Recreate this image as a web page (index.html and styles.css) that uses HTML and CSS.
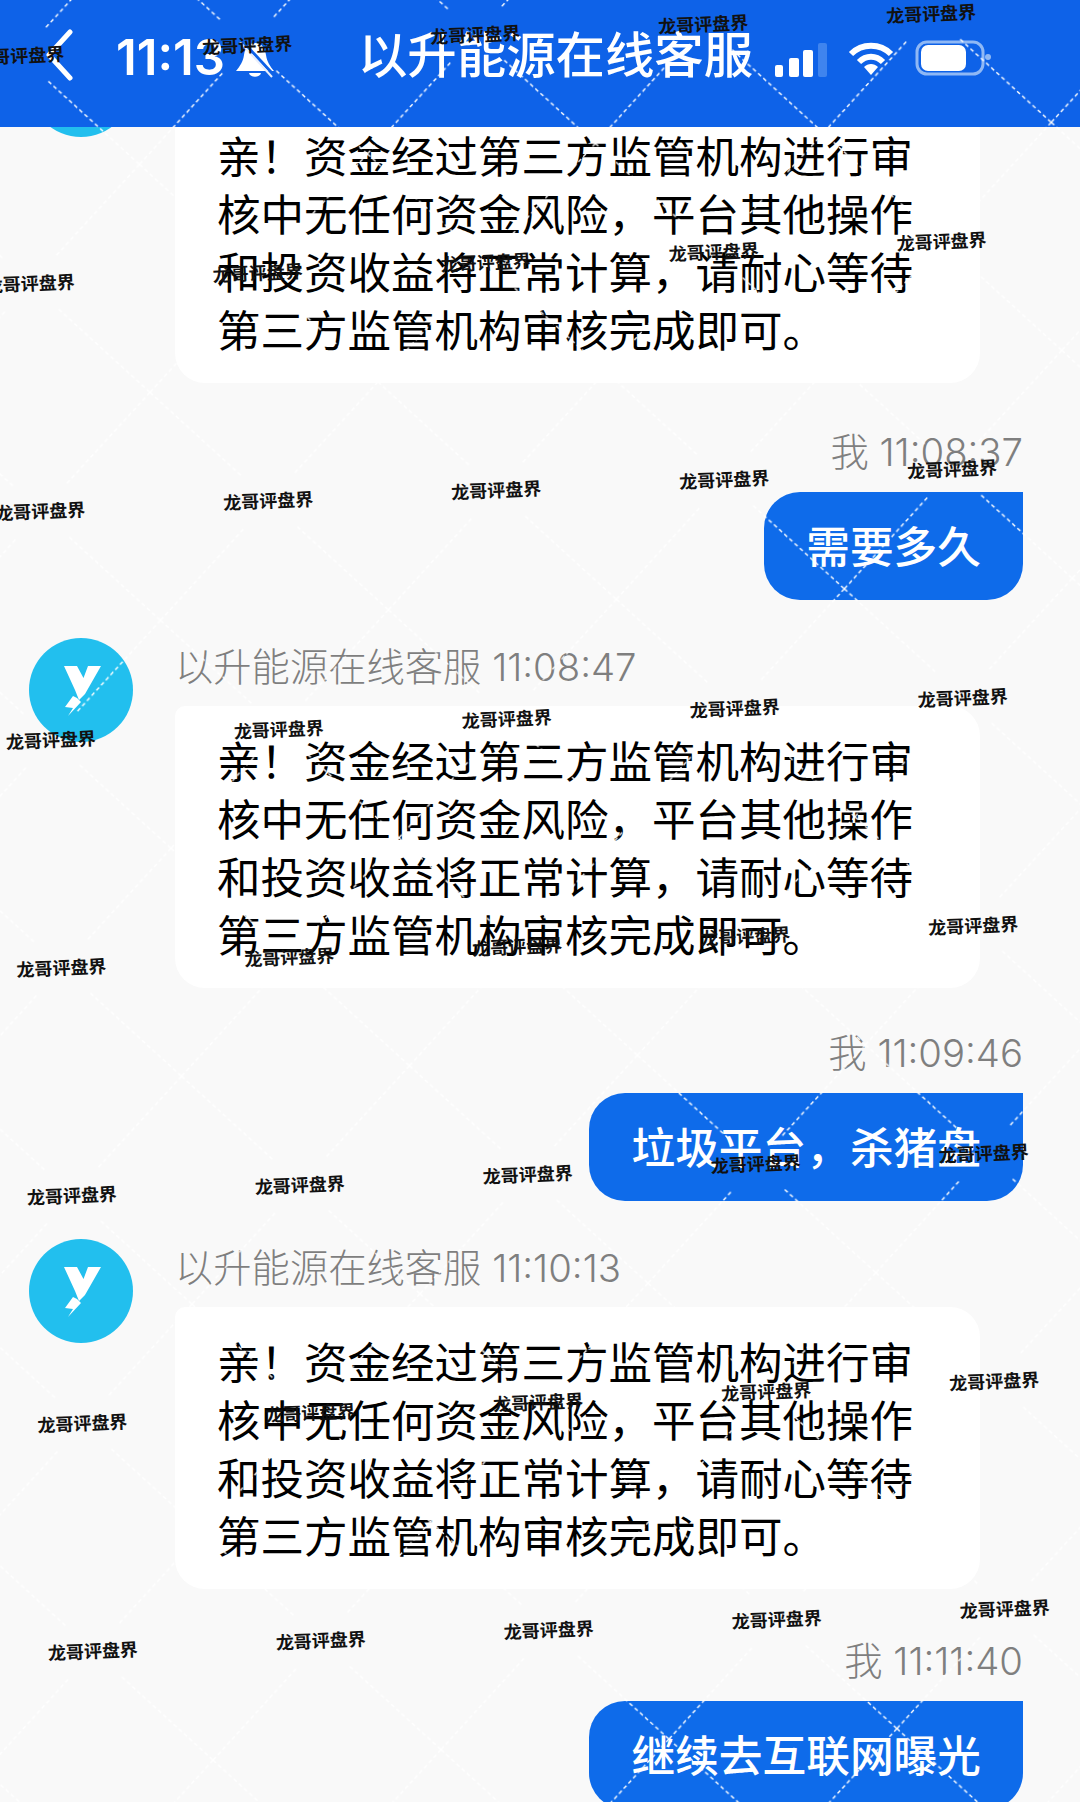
FILE: index.html
```html
<!DOCTYPE html>
<html lang="zh-CN">
<head>
  <meta charset="utf-8">
  <title>以升能源在线客服</title>
  <link rel="stylesheet" href="styles.css">
</head>
<body>

  <div class="screen">

    <header class="topbar">
      <svg class="back" viewBox="0 0 30 52"><path d="M26 3 L5 26 L26 49"/></svg>
      <span class="clock">11:13</span>
      <svg class="bell" viewBox="0 0 42 36">
        <path class="fill" d="M21 1 C14 1 11 6 10 13 C9 20 6 24 2 29 H40 C36 24 33 20 32 13 C31 6 28 1 21 1 Z"/>
        <path class="fill" d="M15 31 H27 C26 36 16 36 15 31 Z"/>
        <path class="cut" d="M11 2 L37 30"/>
        <path class="slash" d="M6 0 L38 35"/>
      </svg>
      <h1 class="title">以升能源在线客服</h1>
      <svg class="signal" viewBox="0 0 54 34">
        <rect x="1" y="22" width="8" height="12" rx="2"/>
        <rect x="15" y="15" width="10" height="19" rx="2"/>
        <rect x="29" y="7" width="10" height="27" rx="2"/>
        <rect class="off" x="44" y="0" width="9" height="34" rx="2"/>
      </svg>
      <svg class="wifi" viewBox="0 0 46 34">
        <path d="M3 12 C14 1 32 1 43 12"/>
        <path d="M11 20 C18 13 28 13 35 20"/>
        <path class="dot" d="M16 25 C20 21 26 21 30 25 L23 33 Z"/>
      </svg>
      <svg class="battery" viewBox="0 0 78 36">
        <rect class="shell" x="2" y="2" width="66" height="32" rx="10"/>
        <rect class="level" x="6" y="5" width="45" height="26" rx="7"/>
        <circle class="tip" cx="73" cy="17" r="3"/>
      </svg>
    </header>

    <main class="chat">

      <div class="msg">
        <svg class="avatar" viewBox="0 0 104 104"><use href="#logo"/></svg>
        <div class="msg-body">
          <div class="meta"></div>
          <div class="bubble">亲！资金经过第三方监管机构进行审核中无任何资金风险，平台其他操作和投资收益将正常计算，请耐心等待第三方监管机构审核完成即可。</div>
        </div>
      </div>

      <div class="mine mine-a">
        <div class="meta">我 11:08:37</div>
        <div class="bubble-me">需要多久</div>
      </div>

      <div class="msg">
        <svg class="avatar" viewBox="0 0 104 104"><use href="#logo"/></svg>
        <div class="msg-body">
          <div class="meta">以升能源在线客服 11:08:47</div>
          <div class="bubble">亲！资金经过第三方监管机构进行审核中无任何资金风险，平台其他操作和投资收益将正常计算，请耐心等待第三方监管机构审核完成即可。</div>
        </div>
      </div>

      <div class="mine">
        <div class="meta">我 11:09:46</div>
        <div class="bubble-me">垃圾平台，杀猪盘</div>
      </div>

      <div class="msg">
        <svg class="avatar" viewBox="0 0 104 104"><use href="#logo"/></svg>
        <div class="msg-body">
          <div class="meta">以升能源在线客服 11:10:13</div>
          <div class="bubble">亲！资金经过第三方监管机构进行审核中无任何资金风险，平台其他操作和投资收益将正常计算，请耐心等待第三方监管机构审核完成即可。</div>
        </div>
      </div>

      <div class="mine mine-c">
        <div class="meta">我 11:11:40</div>
        <div class="bubble-me">继续去互联网曝光</div>
      </div>

    </main>

    <!-- watermark lattice, lies over everything -->
    <svg class="lattice" width="1080" height="1802">
      <defs>
        <pattern id="tile" width="228.2" height="228.2" patternUnits="userSpaceOnUse" patternTransform="translate(-99 -53) rotate(-2.64)">
          <path d="M0 0 L87 87 M141 141 L228.2 228.2 M228.2 0 L141 87 M87 141 L0 228.2"/>
        </pattern>
      </defs>
      <rect width="1080" height="1802" fill="url(#tile)"/>
    </svg>

    <div class="marks">
      <span>龙哥评盘界</span><span>龙哥评盘界</span><span>龙哥评盘界</span><span>龙哥评盘界</span><span>龙哥评盘界</span>
      <span>龙哥评盘界</span><span>龙哥评盘界</span><span>龙哥评盘界</span><span>龙哥评盘界</span><span>龙哥评盘界</span>
      <span>龙哥评盘界</span><span>龙哥评盘界</span><span>龙哥评盘界</span><span>龙哥评盘界</span><span>龙哥评盘界</span>
      <span>龙哥评盘界</span><span>龙哥评盘界</span><span>龙哥评盘界</span><span>龙哥评盘界</span><span>龙哥评盘界</span>
      <span>龙哥评盘界</span><span>龙哥评盘界</span><span>龙哥评盘界</span><span>龙哥评盘界</span><span>龙哥评盘界</span>
      <span>龙哥评盘界</span><span>龙哥评盘界</span><span>龙哥评盘界</span><span>龙哥评盘界</span><span>龙哥评盘界</span>
      <span>龙哥评盘界</span><span>龙哥评盘界</span><span>龙哥评盘界</span><span>龙哥评盘界</span><span>龙哥评盘界</span>
      <span>龙哥评盘界</span><span>龙哥评盘界</span><span>龙哥评盘界</span><span>龙哥评盘界</span><span>龙哥评盘界</span>
    </div>

  </div>

  <svg class="sprites" width="0" height="0">
    <symbol id="logo" viewBox="0 0 104 104">
      <circle cx="52" cy="52" r="52" fill="#22bfee"/>
      <path fill="#fff" d="M35 28 H48 L54.5 40 L59 28 H72 L56 56 L50 62 L46 52 Z"/>
      <path fill="#fff" d="M44 58 L36 69 L44 70 L39 78 L52 64 L48 60 Z"/>
    </symbol>
  </svg>

</body>
</html>
```

FILE: styles.css
```css
body {
  margin: 0;
  background: #f9f9f9;
  font-family: Inter, "Noto Sans CJK SC", sans-serif;
}

.screen {
  position: relative;
  width: 1080px;
  height: 1802px;
  overflow: hidden;
  background: #f9f9f9;
}

.sprites {
  position: absolute;
}

/* top bar */
.topbar {
  position: relative;
  z-index: 2;
  display: flex;
  align-items: center;
  box-sizing: border-box;
  height: 127px;
  padding: 0 0 17px 44px;
  background: #0e62e8;
  color: #fff;
}

.back {
  width: 30px;
  height: 52px;
  fill: none;
  stroke: #fff;
  stroke-width: 5;
  stroke-linecap: round;
  stroke-linejoin: round;
}

.clock {
  margin: 4px 0 0 42px;
  font-size: 49px;
  font-weight: 600;
}

.bell {
  width: 42px;
  height: 36px;
  margin: 10px 0 0 9px;
}

.bell .fill {
  fill: #fff;
}

.bell .cut {
  stroke: #0e62e8;
  stroke-width: 3;
}

.bell .slash {
  stroke: #e8eefc;
  stroke-width: 2;
}

.title {
  margin: 0 0 0 82px;
  font-size: 49.4px;
  font-weight: 500;
  line-height: 60px;
}

.signal {
  width: 54px;
  height: 34px;
  margin: 10px 0 0 21px;
  fill: #fff;
}

.signal .off {
  fill: #3f84ee;
}

.wifi {
  width: 46px;
  height: 34px;
  margin: 8px 0 0 20px;
  fill: none;
  stroke: #fff;
  stroke-width: 6;
}

.wifi .dot {
  fill: #fff;
  stroke: none;
}

.battery {
  width: 78px;
  height: 36px;
  margin: 6px 0 0 21px;
}

.battery .shell {
  fill: none;
  stroke: #8fb8f5;
  stroke-width: 3;
}

.battery .level {
  fill: #fff;
}

.battery .tip {
  fill: #8fb8f5;
}

/* chat */
.chat {
  margin-top: -94px;
}

.msg {
  display: flex;
  gap: 42px;
  padding-left: 29px;
}

.avatar {
  flex: none;
  width: 104px;
  height: 104px;
}

.meta {
  height: 56px;
  font-size: 38.3px;
  font-weight: 300;
  line-height: 58px;
  color: #7f7f7f;
  white-space: nowrap;
}

.msg-body .meta {
  margin-bottom: 12px;
}

.bubble {
  box-sizing: border-box;
  width: 805px;
  height: 282px;
  padding: 26.5px 43px 0 42px;
  background: #fff;
  border-radius: 10px 30px 30px 30px;
  font-size: 43.5px;
  line-height: 58px;
  color: #000;
}

.mine {
  display: flex;
  flex-direction: column;
  align-items: flex-end;
  margin-top: 36px;
  margin-bottom: 38px;
  padding-right: 57px;
}

.mine-a {
  margin-top: 40px;
}

.mine-c {
  margin-top: 43px;
}

.mine .meta {
  margin-bottom: 13px;
}

.bubble-me {
  box-sizing: border-box;
  height: 108px;
  padding: 0 42px;
  background: #0e6bea;
  border-radius: 36px 0 36px 36px;
  font-size: 43.7px;
  font-weight: 500;
  line-height: 112px;
  color: #fff;
  white-space: nowrap;
}

/* watermark */
.lattice {
  position: absolute;
  top: 0;
  left: 0;
  z-index: 3;
}

.lattice path {
  fill: none;
  stroke: #fff;
  stroke-width: 1.4;
  stroke-dasharray: 4 3;
}

.marks {
  position: absolute;
  top: -54px;
  left: -100px;
  z-index: 4;
  display: grid;
  grid-template-columns: repeat(5, 228.2px);
  grid-auto-rows: 228.2px;
  place-items: center;
  transform: rotate(-2.64deg);
  transform-origin: 0 0;
}

.marks span {
  font-family: "Noto Sans CJK SC", sans-serif;
  font-size: 18px;
  font-weight: 700;
  line-height: 22px;
  color: #111;
  white-space: nowrap;
}
```
